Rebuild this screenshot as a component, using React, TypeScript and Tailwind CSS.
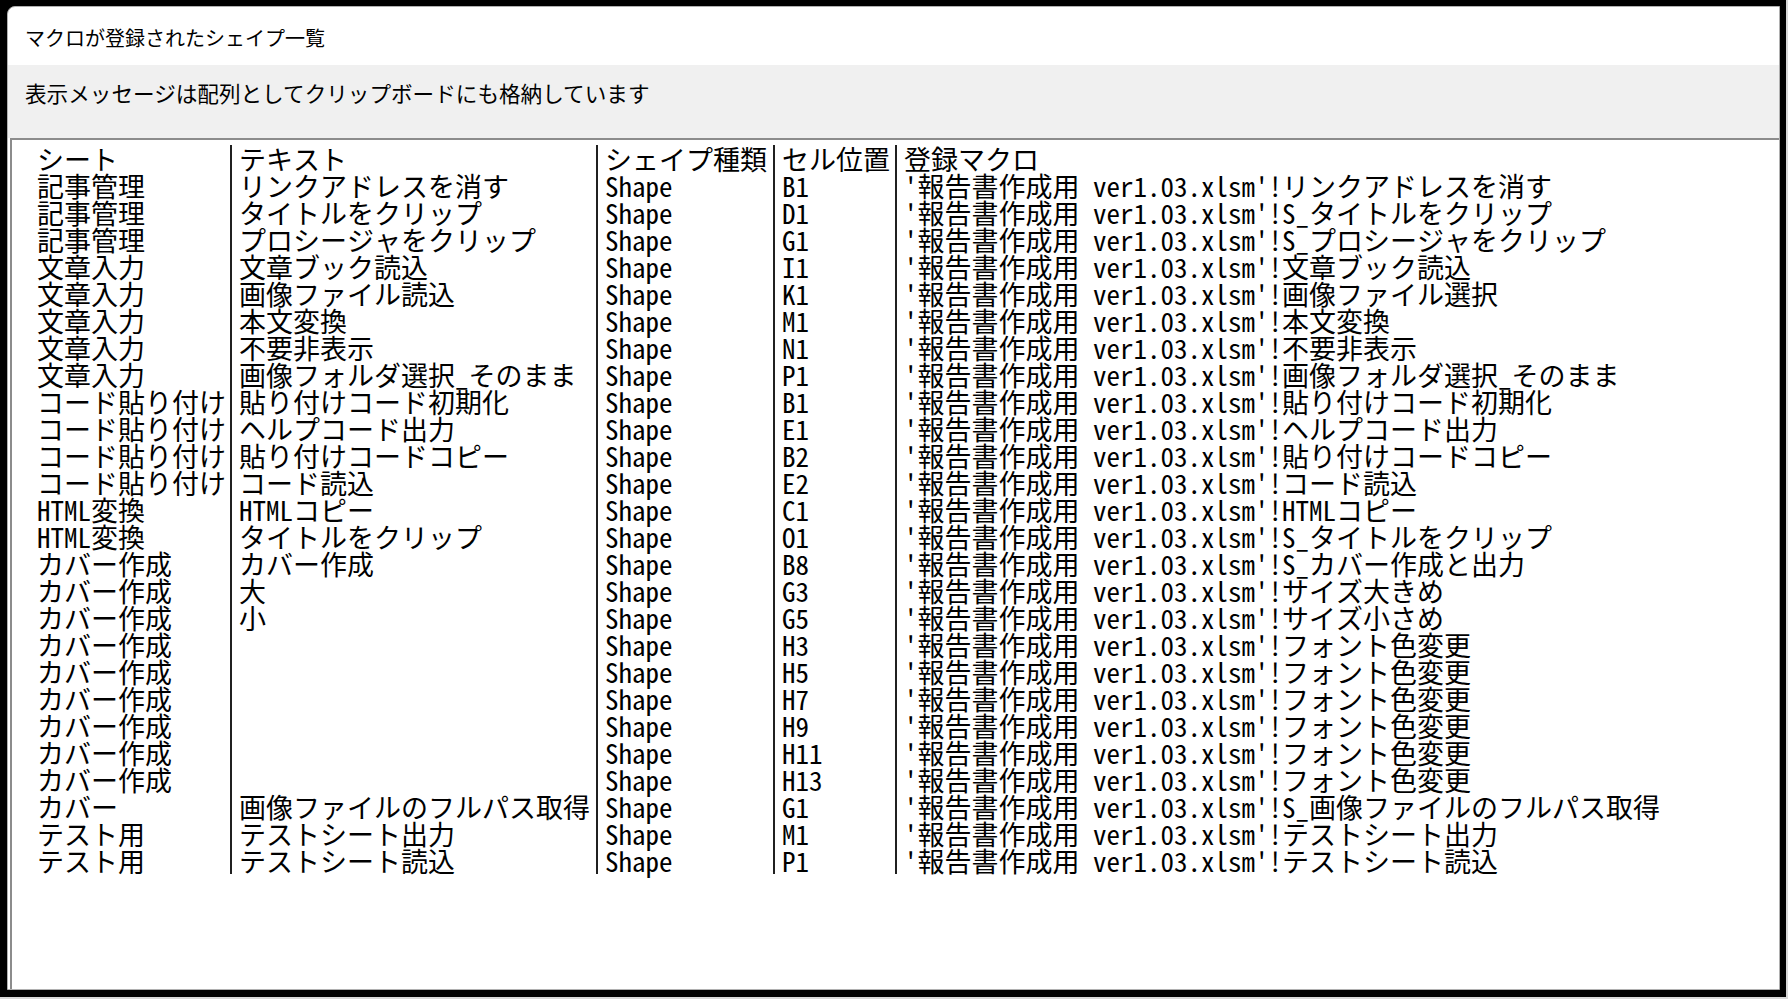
const rows: [string, string, string, string, string][] = [
  ["記事管理", "リンクアドレスを消す", "Shape", "B1", "リンクアドレスを消す"],
  ["記事管理", "タイトルをクリップ", "Shape", "D1", "S_タイトルをクリップ"],
  ["記事管理", "プロシージャをクリップ", "Shape", "G1", "S_プロシージャをクリップ"],
  ["文章入力", "文章ブック読込", "Shape", "I1", "文章ブック読込"],
  ["文章入力", "画像ファイル読込", "Shape", "K1", "画像ファイル選択"],
  ["文章入力", "本文変換", "Shape", "M1", "本文変換"],
  ["文章入力", "不要非表示", "Shape", "N1", "不要非表示"],
  ["文章入力", "画像フォルダ選択_そのまま", "Shape", "P1", "画像フォルダ選択_そのまま"],
  ["コード貼り付け", "貼り付けコード初期化", "Shape", "B1", "貼り付けコード初期化"],
  ["コード貼り付け", "ヘルプコード出力", "Shape", "E1", "ヘルプコード出力"],
  ["コード貼り付け", "貼り付けコードコピー", "Shape", "B2", "貼り付けコードコピー"],
  ["コード貼り付け", "コード読込", "Shape", "E2", "コード読込"],
  ["HTML変換", "HTMLコピー", "Shape", "C1", "HTMLコピー"],
  ["HTML変換", "タイトルをクリップ", "Shape", "O1", "S_タイトルをクリップ"],
  ["カバー作成", "カバー作成", "Shape", "B8", "S_カバー作成と出力"],
  ["カバー作成", "大", "Shape", "G3", "サイズ大きめ"],
  ["カバー作成", "小", "Shape", "G5", "サイズ小さめ"],
  ["カバー作成", "", "Shape", "H3", "フォント色変更"],
  ["カバー作成", "", "Shape", "H5", "フォント色変更"],
  ["カバー作成", "", "Shape", "H7", "フォント色変更"],
  ["カバー作成", "", "Shape", "H9", "フォント色変更"],
  ["カバー作成", "", "Shape", "H11", "フォント色変更"],
  ["カバー作成", "", "Shape", "H13", "フォント色変更"],
  ["カバー", "画像ファイルのフルパス取得", "Shape", "G1", "S_画像ファイルのフルパス取得"],
  ["テスト用", "テストシート出力", "Shape", "M1", "テストシート出力"],
  ["テスト用", "テストシート読込", "Shape", "P1", "テストシート読込"],
];

const ui = "font-['Noto_Sans_CJK_JP',sans-serif]";
const mono = "font-['Noto_Sans_Mono_CJK_JP','Noto_Sans_CJK_JP',monospace]";
const sep = "border-l-2 border-[#202020] pl-[7px]";

function Row({ cells }: { cells: string[] }) {
  return (
    <div className="grid grid-cols-[193px_366px_177px_122px_1fr] h-[27px] leading-[27px] whitespace-pre">
      <div>{cells[0]}</div>
      <div className={sep}>{cells[1]}</div>
      <div className={sep}>{cells[2]}</div>
      <div className={sep}>{cells[3]}</div>
      <div className={sep}>{cells[4]}</div>
    </div>
  );
}

export default function App() {
  return (
    <div className="w-[1788px] h-[999px] bg-[#d8d8d8]">
      <div className="w-[1786px] h-[997px] bg-black pt-[6px] pl-[7px] pr-[6px] pb-[7px]">
        <div className="flex flex-col h-full bg-white border border-[#b0b0b0] rounded-tl-[8px] overflow-hidden">
          {/* title */}
          <div className={`h-[58px] flex items-center pl-[17px] pt-[4px] text-[20px] text-black ${ui}`}>
            マクロが登録されたシェイプ一覧
          </div>
          {/* message */}
          <div className={`h-[73px] bg-[#f0f0f0] pl-[17px] pt-[13px] text-[21.6px] leading-[30px] text-black ${ui}`}>
            表示メッセージは配列としてクリップボードにも格納しています
          </div>
          {/* list box */}
          <div className={`flex-1 ml-[2px] border-t-2 border-l-2 border-[#8c8c8c] bg-white pl-[25px] pt-[5px] text-[27px] text-black ${mono}`}>
            <Row cells={["シート", "テキスト", "シェイプ種類", "セル位置", "登録マクロ"]} />
            {rows.map((r, i) => (
              <Row key={i} cells={[r[0], r[1], r[2], r[3], `'報告書作成用 ver1.03.xlsm'!${r[4]}`]} />
            ))}
          </div>
        </div>
      </div>
    </div>
  );
}
